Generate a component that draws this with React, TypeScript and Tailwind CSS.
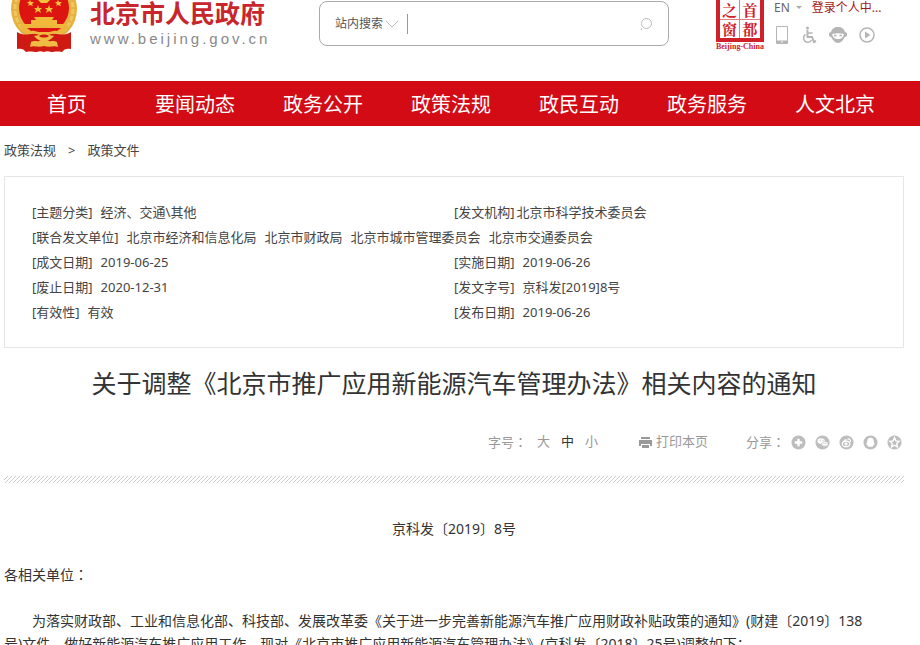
const NAV_ITEMS = ['首页', '要闻动态', '政务公开', '政策法规', '政民互动', '政务服务', '人文北京'];

function Emblem() {
  return (
    <svg className="w-[68px] h-[54px] shrink-0" viewBox="0 0 68 54" aria-label="国徽" role="img">
      <circle cx="34" cy="9" r="33" fill="#e6b23f" />
      <circle cx="34" cy="9" r="29" fill="none" stroke="#efc75c" strokeWidth="3" strokeDasharray="5 2" />
      <circle cx="34" cy="8" r="25" fill="#dc1510" />
      <path d="M7 32c5 3 9 3 13 2h28c4 1 8 1 13-2v17c-4-1-7 0-9 3-5-1-8 0-11 0-2-1-5-1-7 0-3-1-5-1-7 0-4 0-6-1-11 0-2-3-5-4-9-3z" fill="#cf1a14" />
      <path d="M24 17h20l-2 3h5v4h11l-4 3H14l-4-3h11v-4h5z" fill="#f0b93a" />
      <path d="M10 25h48c-1 4-3 6-6 9-4-1-7-2-11 0-4 3-10 3-14 0-4-2-7-1-11 0-3-3-5-5-6-9z" fill="#eeb63c" />
      <path d="M17 28h34l-4 3c-4-1-6 1-8 1h-10c-2 0-4-2-8-1z" fill="#dc1510" />
      <path d="M24 36l5-1c2-3 8-3 10 0l5 1-3 3c-3 2-11 2-14 0z" fill="#f0bd42" />
      <path d="M29 36c2-2 8-2 10 0-2 2-8 2-10 0z" fill="#cf1a14" />
      <path d="M20 47l1-5c4-2 6 0 8-1 2-2 8-2 10 0 2 1 4-1 8 1l1 5c-4-2-8 1-14-1-6 2-10-1-14 1z" fill="#efbd43" />
      <path
        d="M28 5l1 3h3l-2 2 1 3-3-2-3 2 1-3-2-2h3zM39 5l1 3h3l-2 2 1 3-3-2-3 2 1-3-2-2h3zM20 0l1 2h3l-2 2 1 2-3-1-2 1 1-2-2-2h2zM48 0l1 2h3l-2 2 1 2-3-1-2 1 1-2-2-2h2z"
        fill="#f3c23d"
      />
      <path d="M28 0h12l-3 3h-6z" fill="#f3c23d" />
    </svg>
  );
}

function Seal() {
  return (
    <div className="w-[50px] shrink-0 text-[#d0202a]">
      <div className="mx-px h-[42px] border-4 border-t-0 border-[#d0202a] grid grid-cols-2 grid-rows-[20px_18px] font-['Noto_Serif_CJK_SC','Noto_Sans_CJK_SC',serif] text-[15px] leading-[18px] font-bold text-center">
        <span className="pt-px border-r border-b border-[#e08086]">之</span>
        <span className="pt-px border-b border-[#e08086]">首</span>
        <span className="border-r border-[#e08086]">窗</span>
        <span>都</span>
      </div>
      <p className="font-['Liberation_Serif',serif] text-[8px] leading-[9px] font-bold text-center whitespace-nowrap">Beijing-China</p>
    </div>
  );
}

function QuickLinks() {
  return (
    <div className="flex items-center gap-[10px] text-[#b5b5b5]">
      <a href="#" aria-label="手机版">
        <svg className="w-4 h-5" viewBox="0 0 16 20" fill="none" stroke="currentColor">
          <path d="M2.500 1.500h11v17h-11z" />
          <path d="M3 17h10" strokeWidth="3" />
          <path d="M7 17h2" stroke="#fff" />
        </svg>
      </a>
      <a href="#" aria-label="无障碍">
        <svg className="w-[18px] h-[18px]" viewBox="0 0 18 18" fill="none" stroke="currentColor" strokeWidth="1.500">
          <circle cx="7.500" cy="2" r="1.500" fill="currentColor" stroke="none" />
          <path d="M7.500 4v7h4.500l2 5 2-1" strokeWidth="2" />
          <path d="M8 7h4.500" />
          <path d="M5.500 8.500a4.200 4.200 0 1 0 6 5.500" />
        </svg>
      </a>
      <a href="#" aria-label="智能问答">
        <svg className="w-5 h-[18px]" viewBox="0 0 20 18">
          <path d="M10 1c4 0 6 2 7 5l2 1v3l-2 1c-2 3-4 6-7 6s-5-3-7-6l-2-1V7l2-1c1-3 3-5 7-5z" fill="currentColor" />
          <path d="M4 8c4-1 8-1 12 0-1 4-3 5-6 5s-5-1-6-5z" fill="#fff" />
          <path d="M6 9.500h2.500M11.500 9.500H14" stroke="currentColor" strokeWidth="1.500" />
        </svg>
      </a>
      <a href="#" aria-label="视频">
        <svg className="w-[18px] h-[18px]" viewBox="0 0 18 18">
          <circle cx="9" cy="9" r="7" fill="none" stroke="currentColor" strokeWidth="1.500" />
          <path d="M7 5.500v7L12.500 9z" fill="currentColor" />
        </svg>
      </a>
    </div>
  );
}

function Header() {
  return (
    <header className="flex items-start h-[81px] pl-[10px] pr-9">
      <Emblem />
      <a href="#" className="ml-3 w-[180px] whitespace-nowrap">
        <span className="block text-[25px] leading-[26px] font-bold text-[#c8252c]">北京市人民政府</span>
        <span className="block font-['Liberation_Sans',sans-serif] text-[15px] leading-[26px] tracking-[3px] text-[#888]">www.beijing.gov.cn</span>
      </a>

      <form className="ml-[49px] mt-px w-[350px] h-[45px] flex items-center px-[15px] border border-[#aaa] rounded-lg">
        <button type="button" className="flex items-center gap-[2px] text-xs text-[#555] whitespace-nowrap">
          站内搜索
          <svg className="w-[14px] h-2" viewBox="0 0 14 8" fill="none" stroke="#bbb">
            <path d="M1 1l6 6 6-6" />
          </svg>
        </button>
        <input aria-label="站内搜索" className="ml-2 flex-1 min-w-0 h-5 border-l border-[#999] pl-2 text-xs outline-none" />
        <button type="button" aria-label="搜索">
          <svg className="w-[14px] h-[14px]" viewBox="0 0 14 14" fill="none" stroke="#bbb">
            <circle cx="7.500" cy="6.500" r="5" />
            <path d="M3 11.500l-1 1" strokeWidth="1.500" />
          </svg>
        </button>
      </form>

      <div className="ml-auto flex gap-[9px]">
        <Seal />
        <div className="w-[110px]">
          <div className="flex items-center h-[15px] mb-[10px] text-xs whitespace-nowrap">
            <a href="#" className="text-[#666]">EN</a>
            <svg className="ml-[6px] w-[6px] h-1" viewBox="0 0 6 4" fill="#aaa">
              <path d="M0 0h6L3 3z" />
            </svg>
            <a href="#" className="ml-[10px] text-[#a01820]">登录个人中...</a>
          </div>
          <QuickLinks />
        </div>
      </div>
    </header>
  );
}

function MetaItem({ label, tight, children }: { label: string; tight?: boolean; children: React.ReactNode }) {
  return (
    <div className={tight ? 'flex gap-[2px]' : 'flex gap-2'}>
      <dt>[{label}]</dt>
      <dd className="flex gap-2">{children}</dd>
    </div>
  );
}

function DocumentMeta() {
  return (
    <dl className="grid grid-cols-[422px_1fr] border border-[#e6e6e6] pl-[27px] pt-[23px] pb-[22px] text-[13px] leading-[25px] text-[#444] whitespace-nowrap">
      <MetaItem label="主题分类">经济、交通\其他</MetaItem>
      <MetaItem label="发文机构" tight>北京市科学技术委员会</MetaItem>
      <div className="col-span-2">
        <MetaItem label="联合发文单位">
          <span>北京市经济和信息化局</span>
          <span>北京市财政局</span>
          <span>北京市城市管理委员会</span>
          <span>北京市交通委员会</span>
        </MetaItem>
      </div>
      <MetaItem label="成文日期">2019-06-25</MetaItem>
      <MetaItem label="实施日期">2019-06-26</MetaItem>
      <MetaItem label="废止日期">2020-12-31</MetaItem>
      <MetaItem label="发文字号">京科发[2019]8号</MetaItem>
      <MetaItem label="有效性">有效</MetaItem>
      <MetaItem label="发布日期">2019-06-26</MetaItem>
    </dl>
  );
}

// Full-width colon set in the middle of its square
function Colon() {
  return (
    <span lang="ja" className="font-['Noto_Sans_CJK_JP',sans-serif]">：</span>
  );
}

const SHARE_ICONS = [
  { name: '更多', glyph: <path d="M8 4v8M4 8h8" stroke="#fff" strokeWidth="2.500" /> },
  {
    name: '微信',
    glyph: (
      <g fill="#fff">
        <ellipse cx="6.500" cy="6.500" rx="4" ry="3" />
        <ellipse cx="10.500" cy="9.500" rx="3.500" ry="2.500" stroke="#bdbdbd" strokeWidth=".7" />
        <path d="M5 6h1M8 6h1M9 9h1M11 9h1" stroke="#bdbdbd" />
      </g>
    ),
  },
  {
    name: '微博',
    glyph: (
      <g fill="none" stroke="#fff" strokeWidth="1.300">
        <ellipse cx="7.500" cy="9.500" rx="4" ry="3" />
        <circle cx="7.500" cy="9.500" r="1" />
        <path d="M9 4.500c2-1 4 1 3 3M5 6l3-1" />
      </g>
    ),
  },
  { name: 'QQ', glyph: <path d="M8 3c-3 0-3.500 2.500-3.500 4L3.500 10l1 .5 1 2h5l1-2 1-.5-1-3C11.500 5.500 11 3 8 3z" fill="#fff" /> },
  {
    name: 'QQ空间',
    glyph: (
      <path d="M8 3l1.500 3.300 3.500.4-2.600 2.400.7 3.500L8 10.900l-3.100 1.700.7-3.500L3 6.700l3.500-.4z" fill="none" stroke="#fff" strokeWidth="1.500" />
    ),
  },
];

function Toolbar() {
  return (
    <div className="mt-[31px] pr-[2px] flex justify-end items-center h-5 text-[13px] text-[#999] whitespace-nowrap">
      <span>字号<Colon /></span>
      <div className="flex gap-[11px] ml-[10px]">
        <button type="button">大</button>
        <button type="button" className="text-[#333]">中</button>
        <button type="button">小</button>
      </div>
      <button type="button" className="flex items-center gap-[3px] ml-10">
        <svg className="w-[15px] h-[15px]" viewBox="0 0 15 15" fill="#999">
          <path d="M3 2h9v2H3zM1 5h13v6h-2V9H3v2H1z" />
          <path d="M4 10h7v3H4z" />
        </svg>
        打印本页
      </button>
      <span className="ml-[38px]">分享<Colon /></span>
      <div className="flex gap-[9px] ml-[6px]">
        {SHARE_ICONS.map(({ name, glyph }) => (
          <a key={name} href="#" aria-label={name}>
            <svg className="w-[15px] h-[15px]" viewBox="0 0 16 16">
              <circle cx="8" cy="8" r="7.500" fill="#bdbdbd" />
              {glyph}
            </svg>
          </a>
        ))}
      </div>
    </div>
  );
}

function HatchedRule() {
  return (
    <svg className="block mt-6 w-full h-[7px]" aria-hidden="true">
      <defs>
        <pattern id="hatch" width="4" height="4" patternUnits="userSpaceOnUse">
          <path d="M-1 1l2-2M0 4l4-4M3 5l2-2" stroke="#ccc" strokeWidth="1" />
        </pattern>
      </defs>
      <rect width="100%" height="7" fill="url(#hatch)" />
    </svg>
  );
}

export default function App() {
  return (
    <div className="h-screen overflow-hidden bg-white font-['Noto_Sans','Noto_Sans_CJK_SC',sans-serif]" lang="zh-CN">
      <Header />

      {/* Main navigation */}
      <nav className="h-[45px] pt-[2px] bg-[#d30b15] flex items-center pl-[3px] pr-[21px] text-xl text-white">
        {NAV_ITEMS.map((item) => (
          <a key={item} href="#" className="flex-1 text-center whitespace-nowrap">
            {item}
          </a>
        ))}
      </nav>

      <main className="pl-1 pr-4">
        <div className="flex gap-3 h-[50px] items-center text-[13px] text-[#444]">
          <a href="#">政策法规</a>
          <span>&gt;</span>
          <a href="#">政策文件</a>
        </div>

        <DocumentMeta />

        <h1 className="mt-[17px] text-center text-[25px] leading-9 text-[#333] whitespace-nowrap">
          关于调整《北京市推广应用新能源汽车管理办法》相关内容的通知
        </h1>

        <Toolbar />
        <HatchedRule />

        <article className="text-sm leading-[23px] text-[#333] whitespace-nowrap">
          <p className="mt-[34px] text-center">京科发〔2019〕8号</p>
          <p className="mt-[23px]">各相关单位<Colon /></p>
          <p className="mt-[23px] indent-[28px]">
            为落实财政部、工业和信息化部、科技部、发展改革委《关于进一步完善新能源汽车推广应用财政补贴政策的通知》(财建〔2019〕138
            <br />
            号)文件，做好新能源汽车推广应用工作，现对《北京市推广应用新能源汽车管理办法》(京科发〔2018〕25号)调整如下：
          </p>
        </article>
      </main>
    </div>
  );
}
